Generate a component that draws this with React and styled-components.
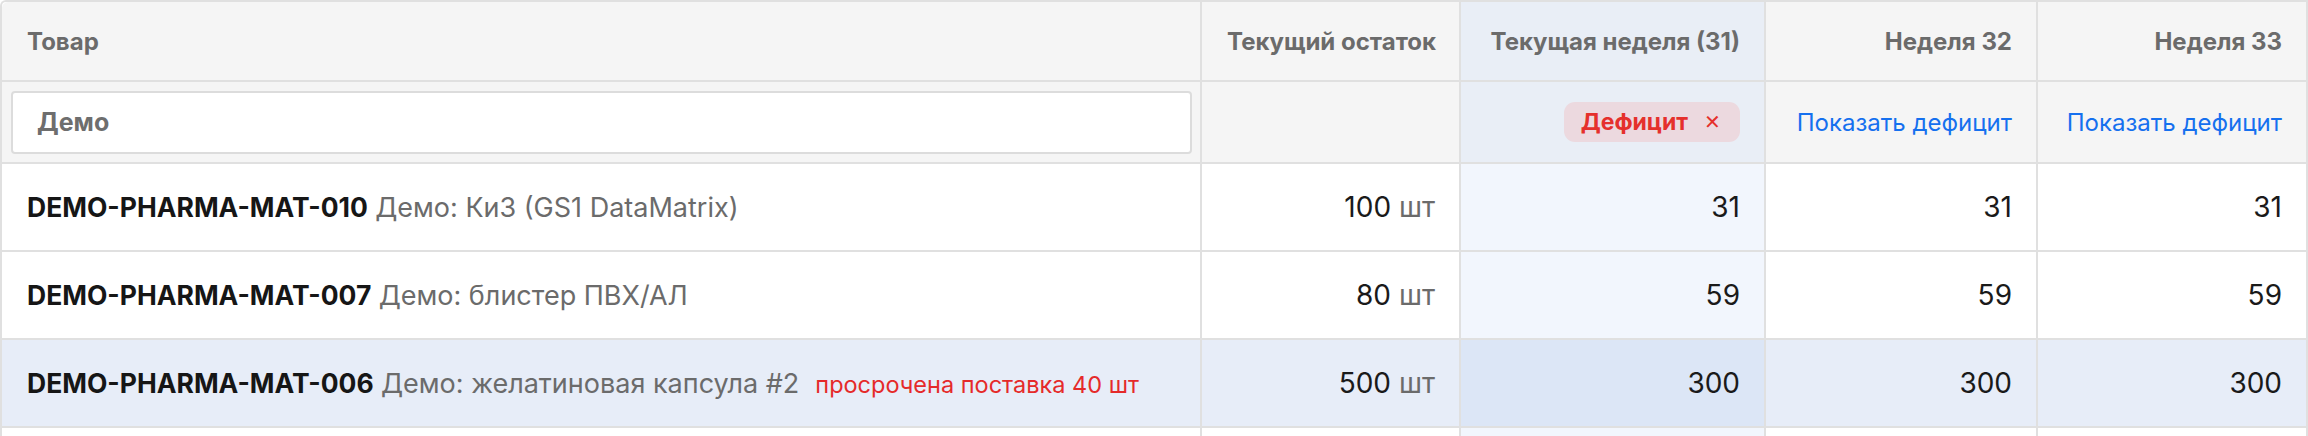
import { createGlobalStyle, styled } from "styled-components";

const GlobalStyle = createGlobalStyle`
  html, body {
    margin: 0;
    padding: 0;
    background: #ffffff;
  }
  body {
    font-family: "Inter", "Noto Sans", sans-serif;
  }
`;

const weeks = [
  { key: "cur", title: "Текущая неделя (31)", current: true },
  { key: "w32", title: "Неделя 32" },
  { key: "w33", title: "Неделя 33" },
];

const rows = [
  {
    code: "DEMO-PHARMA-MAT-010",
    name: "Демо: КиЗ (GS1 DataMatrix)",
    stock: 100,
    values: [31, 31, 31],
  },
  {
    code: "DEMO-PHARMA-MAT-007",
    name: "Демо: блистер ПВХ/АЛ",
    stock: 80,
    values: [59, 59, 59],
  },
  {
    code: "DEMO-PHARMA-MAT-006",
    name: "Демо: желатиновая капсула #2",
    stock: 500,
    values: [300, 300, 300],
    warning: "просрочена поставка 40 шт",
    highlight: true,
  },
  { code: "", name: "", stock: null, values: [null, null, null] },
];

const App = () => {
  return (
    <>
      <GlobalStyle />
      <Table>
        <colgroup>
          <col style={{ width: "1200px" }} />
          <col style={{ width: "259px" }} />
          <col style={{ width: "305px" }} />
          <col style={{ width: "272px" }} />
          <col style={{ width: "270px" }} />
        </colgroup>
        <thead>
          <tr>
            <HeadCell $align="left">Товар</HeadCell>
            <HeadCell>Текущий остаток</HeadCell>
            {weeks.map((w) => (
              <HeadCell key={w.key} $current={w.current}>
                {w.title}
              </HeadCell>
            ))}
          </tr>
          <tr>
            <FilterCell $align="left">
              <SearchInput defaultValue="Демо" />
            </FilterCell>
            <FilterCell />
            {weeks.map((w) => (
              <FilterCell key={w.key} $current={w.current}>
                {w.current ? (
                  <DeficitBadge>
                    Дефицит <span className="close">✕</span>
                  </DeficitBadge>
                ) : (
                  <ShowLink>Показать дефицит</ShowLink>
                )}
              </FilterCell>
            ))}
          </tr>
        </thead>
        <tbody>
          {rows.map((r, i) => (
            <BodyRow key={i} $highlight={r.highlight}>
              <ProductCell>
                {r.code && (
                  <>
                    <Code>{r.code}</Code> <Name>{r.name}</Name>
                    {r.warning && <Warning>{r.warning}</Warning>}
                  </>
                )}
              </ProductCell>
              <NumCell>
                {r.stock !== null && (
                  <>
                    {r.stock} <Unit>шт</Unit>
                  </>
                )}
              </NumCell>
              {r.values.map((v, j) => (
                <NumCell
                  key={j}
                  $current={weeks[j].current}
                  $highlight={r.highlight}
                >
                  {v}
                </NumCell>
              ))}
            </BodyRow>
          ))}
        </tbody>
      </Table>
    </>
  );
};

const Table = styled.table`
  width: 2308px;
  table-layout: fixed;
  border-collapse: separate;
  border-spacing: 0;
  border-top: 2px solid #e0e0e0;
  border-left: 2px solid #e0e0e0;
  border-top-left-radius: 6px;

  th,
  td {
    border-right: 2px solid #e0e0e0;
    border-bottom: 2px solid #e0e0e0;
    box-sizing: border-box;
  }
`;

const HeadCell = styled.th`
  height: 80px;
  padding: 0 24px 0 25px;
  background-color: ${(p) => (p.$current ? "#e9eef6" : "#f5f5f5")};
  color: #6b6b6b;
  font-size: 24px;
  font-weight: 700;
  text-align: ${(p) => p.$align || "right"};
  white-space: nowrap;
  &:first-child {
    border-top-left-radius: 6px;
  }
`;

const FilterCell = styled.td`
  height: 82px;
  padding: 0 24px;
  background-color: ${(p) => (p.$current ? "#e9eef6" : "#f5f5f5")};
  text-align: ${(p) => p.$align || "right"};
  &:first-child {
    padding: 0 8px 0 9px;
  }
`;

const SearchInput = styled.input`
  display: block;
  width: 100%;
  height: 63px;
  box-sizing: border-box;
  border: 2px solid #dcdcdc;
  border-radius: 4px;
  background: #ffffff;
  padding: 0 24px;
  font-family: "Inter", "Noto Sans", sans-serif;
  font-size: 25px;
  font-weight: 700;
  color: #6e6e6e;
  outline: none;
`;

const DeficitBadge = styled.span`
  display: inline-flex;
  align-items: center;
  gap: 16px;
  height: 40px;
  padding: 0 19px 0 17px;
  border-radius: 11px;
  background-color: #ecd9df;
  color: #e5302c;
  font-size: 23px;
  font-weight: 700;

  .close {
    font-weight: 400;
    font-size: 20px;
  }
`;

const ShowLink = styled.span`
  color: #1570ef;
  font-size: 24px;
  cursor: pointer;
  white-space: nowrap;
`;

const BodyRow = styled.tr`
  background-color: ${(p) => (p.$highlight ? "#e7edf8" : "#ffffff")};
`;

const ProductCell = styled.td`
  height: 88px;
  padding: 0 24px 0 25px;
  font-size: 26px;
  white-space: nowrap;
`;

const Code = styled.span`
  font-weight: 700;
  font-size: 26.5px;
  color: #161616;
`;

const Name = styled.span`
  font-size: 27px;
  color: #6b6b6b;
`;

const Warning = styled.span`
  margin-left: 16px;
  font-size: 23.5px;
  color: #e52a2a;
`;

const NumCell = styled.td`
  height: 88px;
  padding: 0 24px;
  text-align: right;
  font-size: 28px;
  color: #1a1a1a;
  background-color: ${(p) =>
    p.$current ? (p.$highlight ? "#dce6f6" : "#f2f6fd") : "transparent"};
`;

const Unit = styled.span`
  color: #6b6b6b;
`;

export default App;
